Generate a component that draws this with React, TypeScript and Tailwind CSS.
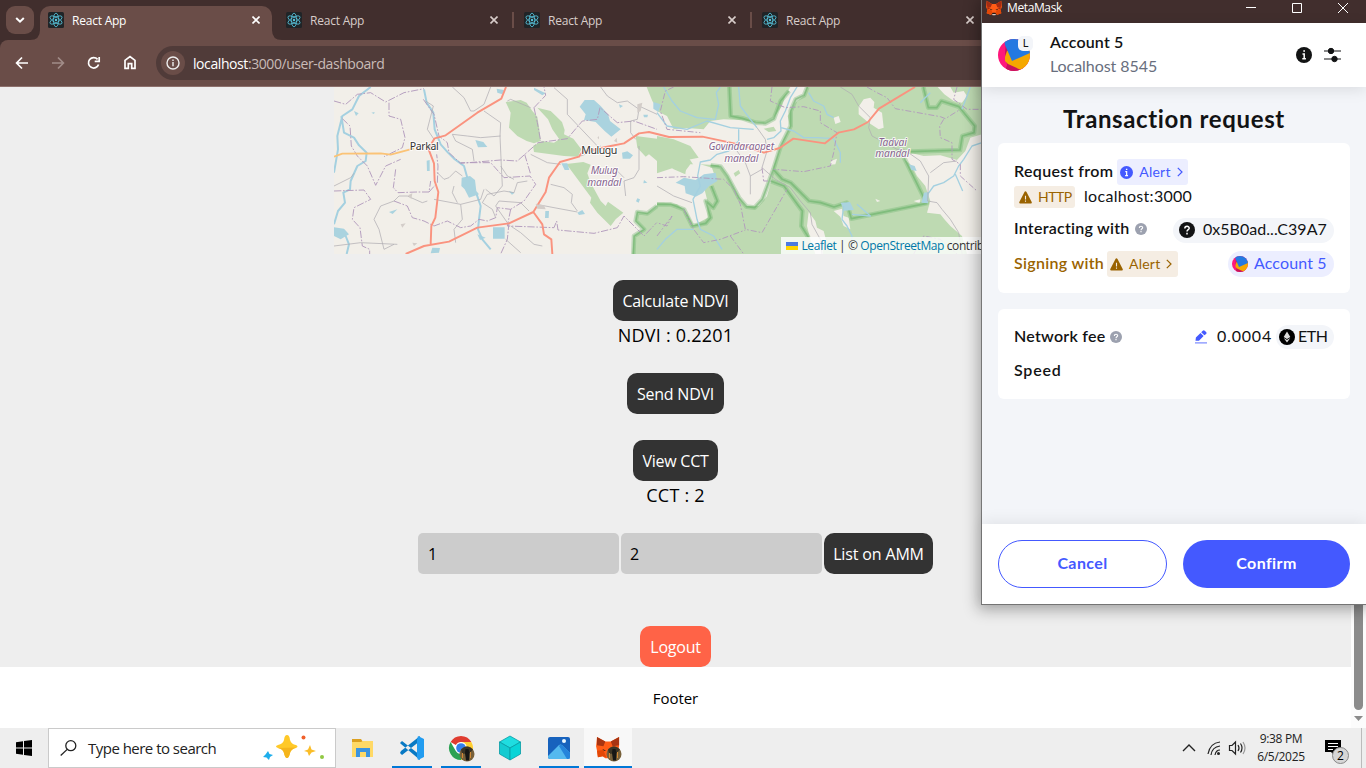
import React from "react";

const UI = "font-['Open_Sans','Noto_Sans',sans-serif]";

function ReactMark() {
  return (
    <svg className="h-4 w-4 shrink-0" viewBox="0 0 16 16">
      <rect width="16" height="16" rx="1.5" fill="#202427" />
      <g fill="none" stroke="#58c4dc" strokeWidth="0.8">
        <ellipse cx="8" cy="8" rx="6.8" ry="2.7" transform="rotate(90 8 8)" />
        <ellipse cx="8" cy="8" rx="6.8" ry="2.7" transform="rotate(30 8 8)" />
        <ellipse cx="8" cy="8" rx="6.8" ry="2.7" transform="rotate(150 8 8)" />
      </g>
      <circle cx="8" cy="8" r="1.2" fill="#58c4dc" />
    </svg>
  );
}

function Cross({ color }: { color: string }) {
  return (
    <svg className="h-2 w-2 shrink-0" viewBox="0 0 8 8" stroke={color} strokeWidth="1.6">
      <path d="M0.5 0.5 7.5 7.5M7.5 0.5 0.5 7.5" />
    </svg>
  );
}

function Tab({ active }: { active?: boolean }) {
  return (
    <div
      className={
        active
          ? "relative mr-1.5 flex h-[34px] w-[232px] shrink-0 items-center rounded-t-[10px] bg-[#6a4d48] pr-3 pb-1.5 pl-2 text-white"
          : "relative mr-1.5 flex h-[34px] w-[232px] shrink-0 items-center pr-3 pb-1.5 pl-2 text-[#d8cdca]"
      }
    >
      <ReactMark />
      <span className="ml-2 grow pt-0.5 text-[12px] tracking-[-0.22px]">React App</span>
      <Cross color={active ? "#fff" : "#d8cdca"} />
      {active && (
        <svg className="absolute bottom-0 -left-2.5 h-2.5 w-[252px]" viewBox="0 0 252 10" fill="#6a4d48">
          <path d="M0 10Q10 10 10 0V10ZM252 10Q242 10 242 0V10Z" />
        </svg>
      )}
    </div>
  );
}

function TabDivider() {
  return <div className="mt-1.5 mr-0.5 -ml-1 h-4 w-[2px] shrink-0 bg-[#6a4d48]" />;
}

function Browser() {
  return (
    <header className={`${UI} h-[87px] shrink-0 bg-[#412e2d]`}>
      <div className="flex h-10 items-start pt-1.5 pl-1.5">
        <div className="mr-1.5 flex h-7 w-7 shrink-0 items-center justify-center rounded-[9px] bg-[#6a4d48]">
          <svg className="h-2 w-3" viewBox="0 0 12 8" fill="none" stroke="#fff" strokeWidth="2">
            <path d="m2.200 2 3.800 3.700L9.800 2" />
          </svg>
        </div>
        <Tab active />
        <Tab />
        <TabDivider />
        <Tab />
        <TabDivider />
        <Tab />
      </div>
      <div className="flex h-[47px] items-start rounded-tl-[8px] border-b border-[#8d706c] bg-[#6a4d48] pt-1.5">
        <svg className="h-[34px] w-[156px] shrink-0" viewBox="0 0 156 34" fill="none" stroke="#fff" strokeWidth="1.7">
          <path d="M28 17H17M22 11.5 16.6 17 22 22.5" />
          <path d="M52 17h11M58 11.5 63.4 17 58 22.5" stroke="#a18c88" />
          <path d="M98.6 18.5A5.200 5.200 0 1 1 97.6 13.4M99.2 11v4.400h-4.500" />
          <path d="M125 22.400v-8.100l5-3.800 5 3.800v8.100h-3.300v-4.800h-3.400v4.800Z" />
        </svg>
        <div className="flex h-[34px] w-[1000px] items-center rounded-l-full bg-[#503b39] pl-[5px]">
          <div className="flex h-6 w-6 items-center justify-center rounded-full bg-[#6a4d48]">
            <svg className="h-4 w-4" viewBox="0 0 16 16" fill="none" stroke="#eee" strokeWidth="1.4">
              <circle cx="8" cy="8" r="6" />
              <path d="M8 7v4.200M8 4.500v1.400" />
            </svg>
          </div>
          <div className="ml-2 text-[14px] tracking-[-0.42px] text-[#c9bbb8]">
            <span className="text-white">localhost</span>:3000/user-dashboard
          </div>
        </div>
      </div>
    </header>
  );
}

const RESERVE_EDGE =
  "M1186 3 1190 90 1225 97 1265 110 1294 112 1320 98 1340 45 1365 15M1420 3 1410 28 1385 40 1370 75 1370 120 1340 180 1318 250 1345 280 1370 290 1400 320 1425 345 1460 350 1500 363 1538 350 1552 398 1778 352 1745 285 1710 215M1730 197 1878 192 1885 150 1920 140 1922 120 1875 62 1822 45 1808 65 1783 65 1768 3M1318 250 1300 300 1285 340 1262 365 1238 362 1215 335 1180 270 1160 242 1130 238M969 355 1010 355 1050 370 1075 420 1115 412 1130 395 1115 345 1138 365 1150 345 1132 300M1310 285 1350 300 1390 355 1405 375 1402 420 1424 455M969 360 940 382 910 378 905 405 930 430 900 450 898 504";

function MapView() {
  return (
    <div className="relative ml-[334px] h-[167px] w-[683px] shrink-0 overflow-hidden bg-[#f2efe9]">
      <svg className="h-[167px] w-[683px]" viewBox="0 3 2049 501" fill="none" strokeLinejoin="round">
        <g fill="#bedab2">
          <path d="M515 48 560 42 578 50 595 75 610 92 616 130 620 165 600 172 578 165 550 150 525 125 530 80Z" />
          <path d="M610 65 650 75 668 92 684 108 692 132 690 145 718 158 742 190 732 212 690 210 600 198 597 180 625 165 660 170 676 160 655 130 642 100Z" />
          <path d="M697 234 748 228 770 236 760 262 770 290 800 345 815 360 822 347 868 380 845 400 830 420 790 380 768 350 772 335Z" />
          <path d="M905 150 969 158V225L945 205 935 212 910 185Z" />
          <path d="M938 3H975V75L955 45Z" />
          <path d="M895 504 900 450 930 430 905 405 910 378 940 382 975 360V504Z" />
          <path d="M969 3H2049V504H969Z" />
        </g>
        <g fill="#f2efe9" transform="translate(969 0)">
          <path d="M0 75 30 90 50 130 90 126 140 130 160 105 200 100 260 103 320 112 350 95 375 60 385 30 400 3H450L440 30 415 50 392 90 400 125 380 160 365 200 350 240 343 285 330 330 305 360 265 360 240 325 215 280 185 238 130 235 118 250 95 215 70 190 40 180 0 155Z" />
          <path d="M0 262 50 245 80 262 100 235 130 235 165 245 180 275 150 335 152 395 110 418 90 380 60 355 20 350 0 350Z" />
          <path d="M605 62 620 40 640 35 652 48 650 65 675 80 680 125 665 130 635 110 605 85Z" />
          <path d="M530 95 545 90 551 108 535 114ZM522 225 540 218 535 235 520 236ZM655 338 670 345 660 348ZM770 345 790 340 788 352Z" />
          <path d="M730 210 765 202 800 210 850 208 900 222 925 195 940 155 975 145H1080V504H930L915 450 880 420 862 400 850 385 810 380 820 345 805 300 780 270 765 240Z" />
          <path d="M842 3H880L890 20 920 15 930 30 915 50 890 45 862 25Z" />
          <path d="M455 378 475 405 480 425 500 435 508 465 495 470 498 504H475L460 460 450 420ZM530 375 555 368 560 390 575 395 580 430 560 420 550 392Z" />
        </g>
        <g fill="#bedab2" transform="translate(969 0)">
          <path d="M0 150 50 160 100 180 125 215 90 222 85 265 50 250 0 215ZM230 262 245 252 250 262 235 272ZM320 128 350 122 358 135 335 138ZM165 245 200 260 210 300 180 370 150 340 140 300 175 275Z" />
        </g>
        <path d={RESERVE_EDGE} stroke="#6db56c" strokeOpacity=".35" strokeWidth="14" />
        <path d={RESERVE_EDGE} stroke="#5fae60" strokeOpacity=".5" strokeWidth="5" />
        <g fill="#aad3df">
          <path d="M737 62 752 42 780 42 800 60 822 85 828 105 860 130 832 152 812 135 785 108 750 102 755 85Z" />
          <path d="M383 275 408 270 423 282 427 315 435 325 405 335 392 310 382 300ZM477 424 512 424 512 458 477 458ZM0 424 30 428 45 445 20 460 0 450ZM424 162 448 168 460 183 432 184ZM682 232 700 232 706 252 692 252ZM864 200 880 196 897 208 888 218 866 218ZM278 224 287 222 287 255 279 255ZM730 380 745 372 753 384 735 387ZM295 485 318 486 315 500 290 502ZM488 8 510 12 505 25 490 20ZM600 5 635 22 625 28 600 12ZM634 375 645 375 644 396 633 396ZM928 86 942 86 940 94 930 94ZM855 55 867 60 858 66ZM165 378 190 370 176 384ZM112 80 122 78 120 84ZM60 75 74 82 66 90ZM430 445 455 455 438 462ZM524 315 542 320 534 326ZM958 48 980 55 973 78 958 68ZM918 340 910 337 906 346 914 350ZM930 282 940 290 928 292Z" />
          <path d="M1025 290 1050 275 1085 282 1110 265 1145 260 1150 285 1125 300 1105 322 1085 332 1055 322 1052 300ZM1725 235 1742 240 1748 255 1732 252ZM1520 350 1548 348 1560 372 1530 374ZM1770 320 1785 318 1782 352 1762 350Z" />
        </g>
        <g stroke="#a4d0e0">
          <path d="M110 3 75 30 55 70 25 90 10 150 12 190 0 260M22 90 30 140 60 155 75 178 98 200 95 225 70 240 50 285 48 310 28 320 33 350 12 375 0 415M270 10 278 50 298 80 302 130 320 175 342 200 360 218 390 240 400 275M428 325 440 360 435 400 432 430 445 460 470 490M35 450 45 475 38 504" strokeWidth="6" />
          <g transform="translate(969 0)" strokeWidth="4">
            <path d="M20 3 45 45 70 75 120 95 175 100 185 55 178 20 190 3M245 3 250 60 280 100 300 125M420 3 400 35 385 75 370 105 372 135 350 155 330 160M245 130 245 165 215 195 180 205 160 222 130 228 122 270 130 300 108 340 120 400 130 430 170 450 195 490M455 20 470 45 500 60 510 85 530 95M372 125 410 135 440 155 480 155 530 158 550 200 550 230M790 50 800 40 820 20M0 490 25 460 60 430 110 430M560 360 555 400 570 420 585 450 580 504M600 355 640 390 585 385M812 325 830 300 860 290 890 270 905 240 920 220 945 180 975 170M895 265 917 315M0 80 30 120 90 130 150 105 220 125 290 130M915 70 940 3" />
          </g>
        </g>
        <g stroke="#b29abc" strokeWidth="2.8" strokeDasharray="22 5 5 5">
          <path d="M0 45 35 55 70 25 110 20 155 48 210 20 270 8M165 50 165 90 200 100 213 155 205 185 150 212M25 98 48 120 52 180 70 210 100 240 125 298 155 240 200 220M185 250 178 305 192 320 250 318 285 318 290 285M285 318 310 290 312 240 308 205M0 315 90 312 110 340 60 365 55 400 78 425 85 480 107 490 107 504M180 345 220 360 235 395 270 405 300 420 340 405 380 425 410 420 435 400 460 405 485 395 490 365 530 370 570 345 605 295 588 270 510 275 470 230 380 230M268 40 300 85 315 150 340 170 345 200 380 232 500 222 550 225 612 170 700 158 745 105 790 100 798 65 850 110 900 105 969 130M600 65 635 28 630 3M600 65 610 110 620 165M572 205 590 265M525 410 520 460 500 504M530 370 520 420 660 425 668 405 672 432 780 442 850 425 870 390 900 420 930 450 968 410" />
          <g transform="translate(969 0)">
            <path d="M50 3 25 15 10 75 30 130 130 140M345 3 340 45 385 65 440 62 490 75 490 110 540 140 530 200 520 240 440 257 350 250M630 3 660 20 690 35 715 68 850 92 865 98 910 70M860 100 848 120 850 155 885 170 885 220 910 235 910 270 960 315M0 275 80 272 200 280 230 310 250 355 265 430 315 440 390 310M80 370 110 430 140 470 190 460 265 432M0 450 45 390 30 420 0 410M315 245 320 285 340 285M220 450 260 504M770 504 800 450 850 460 900 504M900 3 890 40 930 70 975 70" strokeDasharray="18 6 5 6" />
          </g>
        </g>
        <g stroke="#b0adb2" strokeWidth="2.200">
          <path d="M300 160 280 130 298 60 275 45M355 3 390 35 410 75 420 75 450 55 470 3M0 300 50 275 60 262M450 75 500 110 498 150 502 240 505 300 480 330 455 310M355 145 400 150 440 155 500 150M355 145 365 165 415 190 420 225M310 260 330 280 345 275 365 255 385 270M300 340 380 355 385 400 360 430 365 470M380 355 440 340 450 310M0 480 80 470 190 475M180 475 150 490 135 430 120 400 140 360 180 345 195 330 220 330 265 350 280 345M590 205 640 230 680 235M650 295 690 305 715 325 712 350 730 375M608 355 660 365 730 378M485 395 475 370 445 350 460 325 510 315 540 320 550 290 580 285M800 3 820 30 850 50 880 45 915 70 910 100 890 105 890 140 905 160M660 5 700 40 700 85 790 180M915 60 969 85M740 210 780 195 800 180M915 180 915 250 900 275 870 285 875 330M840 245 870 275M590 65 530 40 520 45M520 410 485 360 495 345 560 350 585 375M500 240 520 270 540 280M515 460 560 500M370 350 355 320 360 300M530 420 560 440 600 475 625 480" />
          <g transform="translate(969 0)">
            <path d="M550 3 585 25 605 60 640 95 635 125 645 150 720 190 740 190 790 225 815 270 812 345 840 350 855 370 880 400 905 440 915 504M300 125 325 160 330 195 315 245 355 280 400 305 430 345 460 380 465 415 490 460 495 504M240 195 265 230 280 270 280 325M280 270 315 250M0 300 50 330 105 350M820 260 860 230 900 225" />
          </g>
        </g>
        <path d="M0 212 25 203 140 202 170 206 240 187" stroke="#fbc376" strokeWidth="5.500" />
        <path d="M516 3 502 38 430 80 335 148 302 157 283 188 300 232 302 285 313 318 304 395 292 420 290 475M215 504 270 480 345 467 430 425 525 412 598 378 635 318 645 275 678 228 735 212 745 198 830 180 870 172 915 142 945 138 1005 153 1105 152 1200 172 1230 180 1290 200 1337 186 1378 158 1473 172 1513 140 1560 130 1602 108 1635 68 1743 3M598 378 625 415 630 445 652 460 655 504" stroke="#fa937f" strokeWidth="5.800" />
        <g fill="#d3cdc9">
          <path d="M222 328 235 322 232 340ZM235 470 250 472 240 480ZM200 415 215 412 205 425ZM605 355 630 358 635 370 610 368ZM910 55 925 50 920 75 910 80ZM790 155 795 150 795 160ZM840 165 848 155 850 170Z" />
        </g>
        <g fontFamily="Noto Sans, sans-serif" stroke="#fff" strokeOpacity=".8" strokeWidth="6" paintOrder="stroke" textAnchor="middle">
          <g fill="#333" fontSize="32">
            <text x="271" y="191" textLength="87">Parkal</text>
            <text x="796" y="203" textLength="108">Mulugu</text>
          </g>
          <g fill="#87658f" fontSize="31" fontStyle="italic">
            <text x="811" y="265" textLength="82">Mulug</text>
            <text x="811" y="300" textLength="102">mandal</text>
            <text x="1222" y="192" textLength="197">Govindaraopet</text>
            <text x="1222" y="227" textLength="102">mandal</text>
            <text x="1676" y="179" textLength="85">Tadvai</text>
            <text x="1675" y="214" textLength="102">mandal</text>
          </g>
        </g>
      </svg>
      <div className={`${UI} absolute right-0 bottom-0 flex h-[17px] w-[236px] items-center bg-white/80 pl-[5px] text-[12px] tracking-[-0.41px] whitespace-pre text-[#333]`}>
        <svg className="mr-[3.500px] h-2 w-3 shrink-0" viewBox="0 0 12 8">
          <path fill="#4c7be1" d="M0 0h12v4H0z" />
          <path fill="#ffd500" d="M0 4h12v4H0z" />
        </svg>
        <span className="text-[#0078a8]">Leaflet</span> | © <span className="text-[#0078a8]">OpenStreetMap</span> contributors
      </div>
    </div>
  );
}

function DarkButton({ children, className }: { children: React.ReactNode; className: string }) {
  return (
    <button className={`flex h-[41px] shrink-0 items-center justify-center rounded-[10px] pt-px text-[16px] whitespace-nowrap text-white ${className}`}>
      {children}
    </button>
  );
}

function Dashboard() {
  return (
    <div className={`${UI} flex h-[641px] shrink-0 bg-white text-black`}>
      <div className="w-[1351px]">
        <main className="flex h-[580px] flex-col bg-[#eee]">
          <MapView />
          <div className="flex flex-col items-center pt-[26px]">
            <DarkButton className="w-[125px] bg-[#333] tracking-[-0.27px]">Calculate NDVI</DarkButton>
            <p className="h-[52px] text-[18px] leading-[28px] tracking-[0.22px]">NDVI : 0.2201</p>
            <DarkButton className="w-[97px] bg-[#333] tracking-[-0.22px]">Send NDVI</DarkButton>
            <DarkButton className="mt-[26px] w-[85px] bg-[#333] tracking-[-0.25px]">View CCT</DarkButton>
            <p className="h-[52px] text-[18px] leading-[28px] tracking-[0.2px]">CCT : 2</p>
            <div className="flex gap-[2px]">
              <div className="flex h-[41px] w-[201px] items-center rounded-[5px] bg-[#ccc] pt-px pl-[10px] text-[16px]">1</div>
              <div className="flex h-[41px] w-[201px] items-center rounded-[5px] bg-[#ccc] pt-px pl-[9px] text-[16px]">2</div>
              <DarkButton className="w-[109px] bg-[#333] tracking-[-0.15px]">List on AMM</DarkButton>
            </div>
            <DarkButton className="mt-[52px] w-[71px] bg-[#ff6347] tracking-[-0.25px]">Logout</DarkButton>
          </div>
        </main>
        <footer className="flex h-[61px] items-center justify-center pt-px text-[15px] tracking-[-0.05px]">Footer</footer>
      </div>
      <div className="flex w-[15px] flex-col items-center bg-[#fcfcfc]">
        <div className="mt-4 h-[607px] w-[9px] rounded-full bg-[#8b8b8b]" />
        <svg className="mt-1.5 h-[5px] w-[9px]" viewBox="0 0 9 5" fill="#8b8b8b">
          <path d="M0 0h9L4.500 5z" />
        </svg>
      </div>
    </div>
  );
}

function Fox({ className }: { className: string }) {
  return (
    <svg className={className} viewBox="0 0 24 24">
      <path fill="#ff5c16" d="m1 1 8 5h6l8-5 1 9-2 5 1 5-6 2-3-2H10l-3 2-6-2 1-5-2-5Z" />
      <path fill="#a62c12" d="m1 1 8 5-2 5-6-1ZM23 1l-8 5 2 5 6-1ZM2 10l5 2-5 3ZM22 10l-5 2 5 3Z" />
      <path fill="#e34807" d="m2 15 6-1 2 7-3 1-6-2ZM22 15l-6-1-2 7 3 1 6-2Z" />
      <path fill="#271b18" d="m6 13 4 2H7ZM18 13l-4 2h3ZM10 19h4l1 2H9Z" />
      <path fill="#d9c6bd" d="M9 21h6l-1 2h-4Z" />
    </svg>
  );
}

function AccountAvatar({ className }: { className: string }) {
  return (
    <svg className={className} viewBox="0 0 32 32">
      <defs>
        <clipPath id="disc">
          <circle cx="16" cy="16" r="16" />
        </clipPath>
      </defs>
      <g clipPath="url(#disc)">
        <path fill="#ff187c" d="M0 0h32v32H0z" />
        <path fill="#c8145c" d="m8 2-1 12 2 12-2 6h20l-4-6Z" />
        <path fill="#f5a800" d="M7 18 9 12 16 10h20v12L23 31 10 25 7 22Z" />
        <path fill="#2379e1" d="M6 0 7 6 14 22 34 13V-2Z" />
      </g>
    </svg>
  );
}

function Warn() {
  return (
    <svg className="h-[13px] w-[13px] shrink-0" viewBox="0 0 13 13">
      <path d="M6.500 1.300 11.800 11.500H1.200Z" fill="#9a6300" stroke="#9a6300" strokeWidth="2" strokeLinejoin="round" />
      <path d="M6.500 4.800v3.600M6.500 9.600v1.200" stroke="#f4ece2" strokeWidth="1.1" />
    </svg>
  );
}

function Info({ className, color }: { className: string; color: string }) {
  return (
    <svg className={className} viewBox="0 0 16 16">
      <circle cx="8" cy="8" r="8" fill={color} />
      <path d="M6.500 7h1.700v4.600M6.300 11.800h3.600M7.300 4.100h1.700" stroke="#fff" strokeWidth="1.5" fill="none" />
    </svg>
  );
}

function Question({ className, color }: { className: string; color: string }) {
  return (
    <svg className={className} viewBox="0 0 16 16">
      <circle cx="8" cy="8" r="8" fill={color} />
      <path d="M5.800 6.600C5.800 3.600 10.300 3.700 10.200 6.200 10.100 7.800 8 7.700 8 9.600M8 10.800v1.600" stroke="#fff" strokeWidth="1.5" fill="none" />
    </svg>
  );
}

function Chevron() {
  return (
    <svg className="h-2.5 w-1.5" viewBox="0 0 6 10" fill="none" stroke="currentColor" strokeWidth="1.2">
      <path d="m.8.8 4.200 4.200L.8 9.200" />
    </svg>
  );
}

function Wallet() {
  return (
    <aside className="absolute top-0 left-[981px] h-[605px] w-[385px] border-b border-l border-[#777] bg-[#f3f5f9] font-['Lato','Open_Sans',sans-serif] text-[#121314] shadow-[0_2px_14px_3px_rgba(0,0,0,0.3)]">
      <div className={`${UI} flex h-[23px] items-start bg-[#412e2d] pl-1 text-white`}>
        <Fox className="h-4 w-4" />
        <span className="ml-[5px] grow text-[12px] leading-[16px] tracking-[-0.38px]">MetaMask</span>
        <svg className="h-4 w-[125px]" viewBox="0 0 125 16" fill="none" stroke="#fff" strokeWidth="1">
          <path d="M5 7.500h10M51.500 3.500h9v9h-9ZM97 3l10 10M107 3 97 13" />
        </svg>
      </div>
      <div className="relative flex h-16 items-center bg-white pr-[25px] pl-4 shadow-[0_3px_14px_rgba(0,0,0,0.1)]">
        <div className="relative">
          <AccountAvatar className="h-8 w-8" />
          <div className="absolute -top-[3px] -right-[3px] flex h-[15px] w-[15px] items-center justify-center rounded-[5px] bg-[#f3f5f9] text-[11px]">L</div>
        </div>
        <div className="ml-5 grow pb-0.5 text-[16px] leading-6">
          <div className="font-semibold tracking-[0.18px]">Account 5</div>
          <div className="tracking-[-0.05px] text-[#686e7d]">Localhost 8545</div>
        </div>
        <Info className="mr-3 h-4 w-4" color="#121314" />
        <svg className="h-4 w-[17px]" viewBox="0 0 17 16" fill="#121314" stroke="#121314">
          <path d="M0 4h17M0 12h17" strokeWidth="1.2" />
          <circle cx="7" cy="4" r="2.700" />
          <circle cx="10.500" cy="12" r="2.700" />
        </svg>
      </div>
      <h1 className="flex h-14 items-center justify-center pt-2 text-[24px] font-bold tracking-[0.63px]">Transaction request</h1>
      <section className="mx-4 h-[150px] rounded-[6px] bg-white px-4 pt-4 text-[16px]">
        <div className="flex h-[26px] items-center gap-1">
          <span className="pb-0.5 font-semibold tracking-[0.35px]">Request from</span>
          <span className="flex h-[26px] w-[71px] items-center rounded-[3px] bg-[#eceeff] pl-[3px] text-[14px] tracking-[0.2px] text-[#4459ff]">
            <Info className="mr-1.5 h-[13px] w-[13px]" color="#4459ff" />
            <span className="mr-1.5 pb-px">Alert</span>
            <Chevron />
          </span>
        </div>
        <div className="mt-px flex h-[22px] items-center">
          <span className="flex h-[22px] w-[61px] items-center rounded-[3px] bg-[#f5ede3] pl-[5px] text-[14px] tracking-[-0.5px] text-[#9a6300]">
            <Warn />
            <span className="ml-1.5 pb-px">HTTP</span>
          </span>
          <span className="ml-[9px] pb-0.5 tracking-[0.3px]">localhost:3000</span>
        </div>
        <div className="mt-[9px] flex h-[26px] items-center">
          <span className="pb-1 font-semibold tracking-[0.25px]">Interacting with</span>
          <Question className="mb-0.5 ml-1.5 h-3 w-3" color="#9ca1af" />
          <span className="ml-auto flex h-[25px] w-[161px] items-center rounded-full bg-[#f3f5f9] pl-1.5">
            <Question className="mr-2 h-4 w-4" color="#121314" />
            <span className="pb-0.5 tracking-[0.03px]">0x5B0ad...C39A7</span>
          </span>
        </div>
        <div className="mt-2 flex h-[26px] items-center">
          <span className="mr-[3px] pb-0.5 font-semibold tracking-[0.3px] text-[#9a6300]">Signing with</span>
          <span className="flex h-[26px] w-[71px] items-center rounded-[3px] bg-[#f5ede3] pl-[3px] text-[14px] tracking-[0.2px] text-[#9a6300]">
            <Warn />
            <span className="mr-1.5 ml-1.5 pb-px">Alert</span>
            <Chevron />
          </span>
          <span className="ml-auto flex h-[26px] w-[106px] items-center rounded-full bg-[#eceeff] pl-1 text-[#4459ff]">
            <AccountAvatar className="mr-1.5 h-4 w-4" />
            <span className="pb-0.5 tracking-[0.13px]">Account 5</span>
          </span>
        </div>
      </section>
      <section className="mx-4 mt-4 h-[90px] rounded-[6px] bg-white px-4 pt-4 text-[16px]">
        <div className="flex h-6 items-center">
          <span className="pb-0.5 font-semibold tracking-[0.25px]">Network fee</span>
          <Question className="ml-[5px] h-3 w-3" color="#9ca1af" />
          <svg className="mr-2.5 ml-auto h-3.5 w-3" viewBox="0 0 12 14" fill="#4459ff">
            <path d="M.5 10.800.9 7.400 5.500 2.900l3.100 3L4 10.800ZM6.200 2.200 7.800.7q1-.9 1.900 0l1.400 1.400q.9.9 0 1.800L9.400 5.300Z" />
            <path d="M0 12h12v1.700H0z" opacity=".5" />
          </svg>
          <span className="mr-1 pb-0.5 tracking-[0.8px]">0.0004</span>
          <span className="flex h-6 w-[58px] items-center rounded-full bg-[#f3f5f9] pl-[3px]">
            <svg className="mr-[3px] h-4 w-4" viewBox="0 0 16 16">
              <circle cx="8" cy="8" r="8" />
              <path d="m8 2.500 3.300 5.600L8 10 4.700 8.100ZM4.700 9 8 10.900 11.300 9 8 13.500Z" fill="#ddd" />
            </svg>
            <span className="pb-0.5 tracking-[-0.5px]">ETH</span>
          </span>
        </div>
        <div className="mt-[9px] font-semibold tracking-[0.8px]">Speed</div>
      </section>
      <div className="mt-[125px] flex h-20 items-center gap-4 bg-white px-4 text-[16px] font-bold tracking-[0.4px] shadow-[0_-3px_14px_rgba(0,0,0,0.07)]">
        <button className="h-12 w-[169px] rounded-full border border-[#4459ff] pb-0.5 text-[#4459ff]">Cancel</button>
        <button className="h-12 w-[167px] rounded-full bg-[#4459ff] pb-0.5 text-white">Confirm</button>
      </div>
    </aside>
  );
}

function ProfileBadge({ x, y }: { x: number; y: number }) {
  return (
    <g transform={`translate(${x} ${y})`}>
      <circle r="7.500" fill="#77603a" />
      <path d="M-6-4.400A7.500 7.500 0 0 1 6-4.400L3-1-5 0Z" fill="#3a3324" />
      <path d="M-1.500-5h3l1 4-.5 7.500h-3l-1-7.500Z" fill="#171716" />
      <path d="M3-2h1v6H3ZM-5-1h1v5h-1Z" fill="#d38a35" />
    </g>
  );
}

function Taskbar() {
  return (
    <div className={`${UI} flex h-10 shrink-0 items-center bg-[#eee] text-[#222]`}>
      <div className="flex w-12 justify-center">
        <svg className="h-4 w-4" viewBox="0 0 16 16">
          <path d="M0 2.200 7 1.200V7.400H0ZM8 1 16 0V7.400H8ZM0 8.400H7V14.700L0 13.800ZM8 8.400H16V16L8 14.900Z" />
        </svg>
      </div>
      <div className="flex h-10 w-[288px] items-center border border-[#cacaca] bg-white pl-[11px]">
        <svg className="h-4 w-[17px]" viewBox="0 0 17 16" fill="none" stroke="#222" strokeWidth="1.3">
          <circle cx="10.800" cy="5.700" r="5" />
          <path d="M7.200 9.400.7 15.500" />
        </svg>
        <span className="ml-[11px] grow text-[15px] tracking-[-0.52px]">Type here to search</span>
        <svg className="mr-2.5 h-7 w-[62px]" viewBox="0 0 62 28">
          <path d="M24 1Q26.500 1 27 6 28.500 10.500 33 11 36 12.500 33 14 28 15 27 19 26 24 24 24 22 24 21 19 20 15 15 14 11 12.500 15 11 20 10 21 6 21.500 1 24 1Z" fill="#ffc928" />
          <path d="M24 24Q22 24 21 19 20 15 15 14L33 13.500Q28 15 27 19 26 24 24 24Z" fill="#f5b51c" />
          <path d="M47 11 48.500 15.500 53 17 48.500 18.500 46 22 44.500 18 41 17 45 15.500Z" fill="#fabd28" />
          <path d="m5 17 1.500 3 3.500 1-3 2-1 3-2.500-2.500L0 23l2.500-2.500Z" fill="#1daeec" />
          <circle cx="40.500" cy="3.500" r="2" fill="#f0602b" />
          <circle cx="59" cy="23" r="2" fill="#90c843" />
        </svg>
      </div>
      <svg className="h-10 w-[300px] shrink-0" viewBox="336 0 300 40">
        <path fill="#f8f8f8" d="M584 0h48v40h-48z" />
        <g>
          <path fill="#dca01f" d="M352 11h9l2 3h10v4h-21z" />
          <path fill="#ffd966" d="M352 14h9l2-1h10v16h-21z" />
          <path fill="#3c94df" d="M356 20h14v9h-4v-5h-6v5h-4z" />
        </g>
        <g>
          <path fill="#0879c4" d="m400 15 2-2 18 14v5L401 16ZM400 25l2 2 18-14V8L401 23Z" />
          <path fill="#229cf0" d="m418 8 6 3v18l-6 3-1-3V12Z" />
        </g>
        <g>
          <circle cx="461" cy="20" r="12" fill="#fff" />
          <path fill="#df3c30" d="M461 8a12 12 0 0 1 10.400 6H461a6 6 0 0 0-5.200 3l-5.200-3A12 12 0 0 1 461 8Z" />
          <path fill="#2ca153" d="M450.600 14a12 12 0 0 0 10.400 18l5.200-9a6 6 0 0 1-10.400 0Z" />
          <path fill="#ffce32" d="M471.400 14a12 12 0 0 1-10.400 18l5.200-9a6 6 0 0 0-5.200-9Z" />
          <circle cx="461" cy="20" r="4.800" fill="#347eea" />
          <ProfileBadge x={467} y={26} />
        </g>
        <g stroke="#079ca4" strokeWidth=".8" strokeLinejoin="round">
          <path fill="#1fdde0" d="m510 8 10.500 6L510 20l-10.500-6Z" />
          <path fill="#14cbd1" d="M499.500 14 510 20v12l-10.500-6Z" />
          <path fill="#08d4d7" d="M520.500 14 510 20v12l10.500-6Z" />
        </g>
        <g>
          <rect x="548" y="9" width="22" height="22" rx="2" fill="#1762bd" />
          <path fill="#54b9ef" d="m548 28 11-11q1.500-1 3 0l8 8v4q0 2-2 2h-18q-2 0-2-2Z" />
          <path fill="#2584db" d="m562 17 8 8v4q0 2-2 2h-1l-8-13q1.500-2 3-1Z" />
          <circle cx="564" cy="13" r="2" fill="#e9f7ff" />
        </g>
        <g transform="translate(597 9) scale(.92)">
          <path fill="#ff5c16" d="m0 0 9 5h6l9-5v10l-1 5-1 7-6-1-3 2h-4l-3-2-5 1-1-7-1-5Z" />
          <path fill="#a83411" d="m0 0 9 5-2 5-7-1ZM24 0l-9 5 2 5 7-1Z" />
          <path fill="#271b18" d="m6 13 4 2H7Z" />
          <path fill="#e34807" d="m0 15 7-1 3 8-4-1-5 1Z" />
        </g>
        <ProfileBadge x={614} y={26} />
        <path fill="#0078d7" d="M392 38h40v2h-40zM441 38h40v2h-40zM539 38h40v2h-40zM584 38h48v2h-48z" />
      </svg>
      <svg className="ml-auto h-10 w-[66px]" viewBox="1181 0 66 40" fill="none" stroke="#222" strokeWidth="1.2">
        <path d="m1183 23 6-6 6 6" strokeWidth="1.400" />
        <path d="M1208 26Q1210 15 1220 14M1211 27Q1212 19 1220 18M1215 27Q1216 22 1220 22" />
        <circle cx="1218.500" cy="25.500" r="1.500" fill="#222" stroke="none" />
        <path d="M1229.500 17.500h2.500l3.500-3.500v12l-3.500-3.500h-2.500ZM1238 17q2 3 0 6M1240.500 15.500q3 4.500 0 9" />
        <path d="M1243 14q4 6 0 12" stroke="#999" />
      </svg>
      <div className="w-[68px] text-center text-[12px] leading-[18px] tracking-[-0.35px]">
        <div>9:38 PM</div>
        <div className="tracking-[-0.3px]">6/5/2025</div>
      </div>
      <div className="relative ml-2.5 h-10 w-[36px]">
        <svg className="h-10 w-9" viewBox="0 0 36 40">
          <path d="M0 12h16v12h-6v4l-4-4H0Z" />
          <path d="M3 15.500h10M3 18.500h10M3 21.500h5" stroke="#fff" />
        </svg>
        <div className="absolute top-[19px] left-[7px] flex h-[17px] w-[17px] items-center justify-center rounded-full border border-[#888] bg-[#d6d6d6] text-[12px] text-black">2</div>
      </div>
      <div className="h-10 w-[5px] border-l border-[#bbb]" />
    </div>
  );
}

export default function App() {
  return (
    <div className="relative flex h-[768px] w-[1366px] flex-col overflow-hidden bg-white">
      <Browser />
      <Dashboard />
      <Wallet />
      <Taskbar />
    </div>
  );
}
